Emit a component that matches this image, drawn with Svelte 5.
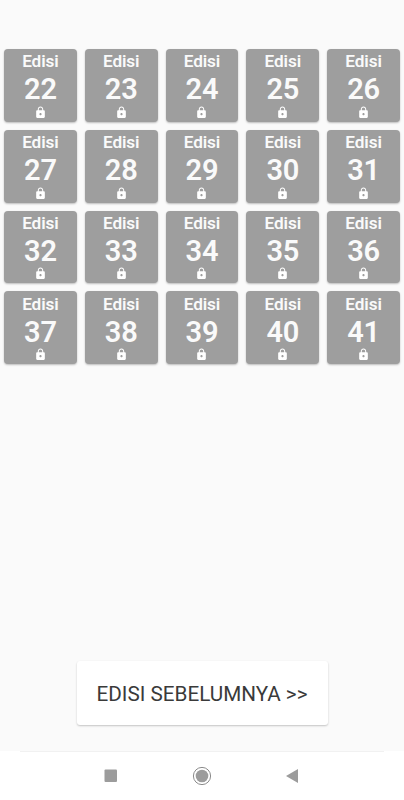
<script>
	const editions = Array.from({ length: 20 }, (_, i) => i + 22)
</script>

<div class="screen">
	<main>
		{#each editions as edition}
			<button class="card">
				<span class="label">Edisi</span>
				<span class="number">{edition}</span>
				<svg class="lock" viewBox="0 0 24 24">
					<path d="M18 8h-1V6c0-2.760-2.240-5-5-5S7 3.240 7 6v2H6c-1.100 0-2 .9-2 2v10c0 1.100.9 2 2 2h12c1.100 0 2-.9 2-2V10c0-1.100-.9-2-2-2zm-6 9c-1.100 0-2-.9-2-2s.9-2 2-2 2 .9 2 2-.9 2-2 2zm3.100-9H8.900V6c0-1.710 1.390-3.100 3.100-3.100s3.100 1.390 3.100 3.100v2z" />
				</svg>
			</button>
		{/each}
	</main>

	<button class="previous">EDISI SEBELUMNYA &gt;&gt;</button>

	<nav>
		<svg viewBox="0 0 20 20"><rect x="3.500" y="3.500" width="12.500" height="12.500" rx="1" /></svg>
		<svg viewBox="0 0 20 20">
			<circle class="ring" cx="10" cy="10" r="8.600" />
			<circle cx="10" cy="10" r="6.300" />
		</svg>
		<svg viewBox="0 0 20 20"><path d="M3 10L15 3v14z" /></svg>
	</nav>
</div>

<style>
	:global(body) {
		margin: 0;
	}

	.screen {
		display: flex;
		flex-direction: column;
		box-sizing: border-box;
		height: 800px;
		padding-top: 49px;
		background: #fafafa;
		font-family: Roboto, sans-serif;
	}

	main {
		display: grid;
		grid-template-columns: repeat(5, 72.800px);
		grid-auto-rows: 72.800px;
		gap: 8px;
		padding: 0 4px;
	}

	button {
		margin: 0;
		padding: 0;
		border: none;
		font-family: inherit;
	}

	.card {
		display: flex;
		flex-direction: column;
		align-items: center;
		justify-content: flex-start;
		border-radius: 4px;
		background: #9e9e9e;
		box-shadow: 0 1px 2px rgba(0, 0, 0, 0.25);
		color: #fafafa;
		font-weight: 700;
	}

	.label {
		padding-top: 1.200px;
		font-size: 17.200px;
		font-weight: 600;
		letter-spacing: -0.100px;
		line-height: 22px;
	}

	.number {
		font-size: 29px;
		font-weight: 600;
		letter-spacing: -0.200px;
		line-height: 34.500px;
	}

	.lock {
		width: 13px;
		height: 13px;
		margin-top: -0.800px;
		fill: #fff;
	}

	.previous {
		align-self: center;
		width: 251px;
		height: 64px;
		margin-top: auto;
		margin-bottom: 26px;
		padding-top: 1px;
		border-radius: 3px;
		background: #fff;
		box-shadow: 0 1px 2px rgba(0, 0, 0, 0.22);
		color: #3a3a3a;
		font-size: 20.700px;
		white-space: nowrap;
	}

	nav {
		display: flex;
		justify-content: center;
		align-items: center;
		gap: 71px;
		height: 49px;
		background: linear-gradient(#f1f1f1, #f1f1f1) center top / 364px 1px no-repeat #fff;
	}

	nav svg {
		width: 20px;
		height: 20px;
		fill: #9c9c9c;
	}

	nav .ring {
		fill: none;
		stroke: #8b8b8b;
	}
</style>
